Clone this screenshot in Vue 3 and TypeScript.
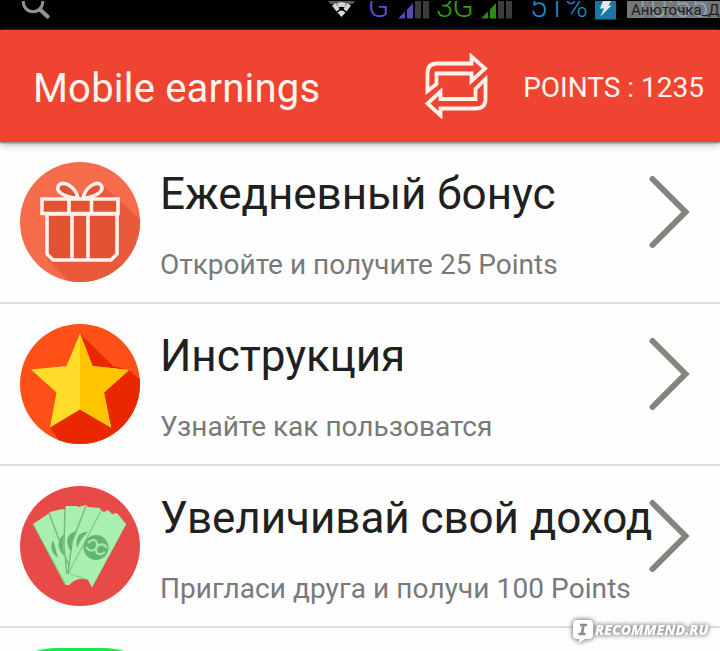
<script setup lang="ts">
interface OfferRow {
  id: 'gift' | 'star' | 'money'
  title: string
  subtitle: string
}

const rows: OfferRow[] = [
  { id: 'gift', title: 'Ежедневный бонус', subtitle: 'Откройте и получите 25 Points' },
  { id: 'star', title: 'Инструкция', subtitle: 'Узнайте как пользоватся' },
  { id: 'money', title: 'Увеличивай свой доход', subtitle: 'Пригласи друга и получи 100 Points' },
]
const points = 1235
</script>

<template>
  <main class="screen">
    <div class="status">
      <svg class="search" width="32" height="20" viewBox="0 0 32 20" fill="none" stroke="#929292">
        <circle cx="14" cy="2" r="9.7" stroke-width="3" />
        <path d="M21 9.5 L28.5 16.5" stroke-width="4.2" stroke-linecap="round" />
      </svg>
      <svg class="wifi" width="28" height="18" viewBox="0 0 28 18">
        <path d="M0 1 H27 L25 4 H2Z" fill="#555" />
        <path d="M9 3.500 Q13.500 1 18 3.500 L16.500 7.500 Q13.500 6 10.500 7.500Z" fill="#d8d8d8" />
        <path d="M4 5.500 L8 3 L11.500 9 L8.500 11.500Z M23 5.500 L19 3 L15.500 9 L18.500 11.500Z M9.500 12.500 Q13.500 8.500 17.500 12.500 L13.500 17Z" fill="#d8d8d8" />
      </svg>
      <span class="net g">G</span>
      <svg class="bars" width="32" height="19" viewBox="0 0 32 19">
        <path d="M0 18.500 L7 11.500 V18.500Z M9 9.500 L15 3 V18.500 H9Z" fill="#5a48b8" />
        <path d="M17 1h6v17.500h-6z M25 1h6v17.500h-6z" fill="#3c3c3c" />
      </svg>
      <span class="net three">3G</span>
      <svg class="bars" width="32" height="19" viewBox="0 0 32 19">
        <path d="M0 18.500 L7 11.500 V18.500Z M9 9.500 L15 3 V18.500 H9Z" fill="#2c8f0c" />
        <path d="M17 1h6v17.500h-6z M25 1h6v17.500h-6z" fill="#3c3c3c" />
      </svg>
      <span class="net percent">51%</span>
      <svg class="charge" width="21" height="20" viewBox="0 0 21 20">
        <rect y="1" width="21" height="18.500" fill="#1678a6" />
        <path d="M8 1 H16 L13.500 5.500 H16.500 L5.500 16.500 L9 8.500 H5Z" fill="#e8e8e8" />
      </svg>
      <div class="clock">
        <span class="time">10:55</span>
        <span class="author">Анюточка_Д</span>
      </div>
    </div>

    <header class="appbar">
      <h1>Mobile earnings</h1>
      <svg class="repeat" width="64" height="66" viewBox="0 0 64 66" fill="none" stroke="#fff0ea" stroke-width="3.8">
        <path d="M2.500 38 V20 Q2.500 10.500 12 10.500 H46.500 V3.500 L60 15.500 L46.500 28 V20.500 H11.500 V31 Z" />
        <path d="M60.500 26 V46 Q60.500 55.500 51 55.500 H15.500 V62.500 L2.500 50.500 L15.500 38.500 V46 H50.500 V36 Z" />
      </svg>
      <span class="points">POINTS : {{ points }}</span>
    </header>

    <section class="list">
      <article v-for="row in rows" :key="row.id" class="row">
        <svg v-if="row.id === 'gift'" class="badge" viewBox="0 0 120 120">
          <clipPath id="gift-circle"><circle cx="60" cy="60" r="60" /></clipPath>
          <g clip-path="url(#gift-circle)">
            <path d="M0 0H120V120H0Z" fill="#f66b49" />
            <path d="M82 23 L130 66 V130 H60 L27 97 V52 L21 48 V37 H47Z" fill="#e85a3b" />
          </g>
          <g fill="#e25336" stroke="#fff0ec" stroke-width="3.600" stroke-linejoin="round">
            <path d="M27 52 H97 V92 L91 98 H33 L27 92Z" />
            <path d="M52 52V98 M68 52V98" />
            <path d="M22 37 H98 V51.500 H22Z M49 37V51.500 M71.500 37V51.500" stroke-linejoin="miter" />
            <path d="M58 36 C56 26 45 18 39 23 C34 29 44 35 56 36 M63 36 C65 26 76 18 81 23 C85 29 76 35 64 36" />
          </g>
        </svg>

        <svg v-else-if="row.id === 'star'" class="badge" viewBox="0 0 120 120">
          <clipPath id="star-circle"><circle cx="60" cy="60" r="60" /></clipPath>
          <g clip-path="url(#star-circle)">
            <path d="M0 0H120V120H0Z" fill="#ff5018" />
            <path d="M60 9.500 L93 42 L109 46 L130 64 V130 H48 L30 103.500 L60 60Z" fill="#ea2800" />
          </g>
          <path d="M60 9.500 L72.500 42 L109 46 L84 68.500 L91 103.500 L60 85.500 L30 103.500 L36.500 68.500 L11 45.500 L46.500 42Z" fill="#ffdc27" />
          <path d="M60 9.500 L72.500 42 L109 46 L84 68.500 L91 103.500 L60 85.500Z" fill="#ffc400" />
        </svg>

        <svg v-else class="badge" viewBox="0 0 120 120">
          <circle cx="60" cy="60" r="60" fill="#e84a47" />
          <path d="M13 38 L28 28 L30 26 L42 23 L45 24 L46 20 L57 20 L58 21 L66 19 L68 21 L80 22 L81 26 L106 38 L72 101 L68 94 Q58 90 49 99 L45 99Z" fill="#a9efb2" />
          <path d="M29 27 L49 80 M45 23 L44 60 L47 88 M66 20 L52 56 L48 88" stroke="#75bd7e" stroke-width="1.500" fill="none" />
          <path d="M13 38 L46 99 M106 38 L72 101" stroke="#7fc586" stroke-width="1" fill="none" />
          <g fill="#65b572">
            <path d="M33 54 Q28 64 38 72 Q36 64 33 54Z" />
            <path d="M44 48 Q33 58 44 70 Q42 60 44 48Z" />
            <path d="M57 45 Q43 48 49 63 L52 64 Q51 54 57 45Z" />
            <path d="M68 46 Q54 46 57 62 Q61 52 68 46Z" />
          </g>
          <path d="M49 86 L81 24 L84 26 L88 24 L92 28 L97 27 L106 38 L72 101 L68 94 L51 87Z" fill="#a9efb2" />
          <path d="M48 88 L81 25 M50 88 L69 94" stroke="#83c98c" stroke-width="1.300" fill="none" />
          <circle cx="76" cy="61.500" r="12.500" fill="#65b572" />
          <path d="M68 57 Q72 52 76 55 Q79 61 74 64 Q69 66 66 61 M85 66 Q80 70 77 67 Q74 62 79 59 Q84 57 87 62" fill="none" stroke="#a3e8ab" stroke-width="2.200" />
        </svg>

        <div class="copy">
          <h2>{{ row.title }}</h2>
          <p :class="row.id">{{ row.subtitle }}</p>
        </div>
        <svg class="chevron" width="44" height="76" viewBox="0 0 44 76">
          <path d="M4.500 5 L37.500 38 L4.500 71" fill="none" stroke="#85857d" stroke-width="6" stroke-linecap="round" />
        </svg>
      </article>
      <div class="next"><div class="next-badge"></div></div>
    </section>

    <div class="watermark">
      <svg width="24" height="26" viewBox="0 0 24 26">
        <path d="M5 1H17Q21 1 21 5V16Q21 20 17 20H13L7 24V20H5Q1 20 1 16V5Q1 1 5 1Z" fill="#fff" />
        <path d="M8 6H15M6.500 15H13.500M11.500 6L10 15" stroke="#8c8c8c" stroke-width="2.600" />
      </svg>
      <span>RECOMMEND.RU</span>
    </div>
  </main>
</template>

<style>
body { margin: 0; overflow: hidden; }
</style>

<style scoped>
.screen { position: relative; width: 720px; height: 651px; overflow: hidden; display: flex; flex-direction: column; background: #fefefe; font-family: Roboto, "Liberation Sans", sans-serif; }
.status { height: 29px; border-top: 1px solid #000; flex: none; display: flex; align-items: flex-start; background: #000; overflow: hidden; }
.status svg { display: block; flex: none; margin-top: -1px; }
.search { margin-left: 19px; }
.wifi { margin-left: 277px; }
.net { flex: none; height: 30px; line-height: 34px; margin-top: -11px; font-size: 31px; font-weight: 300; white-space: nowrap; }
.g { width: 30px; margin-left: 12px; color: #6652d0; }
.three { width: 45px; margin-left: 6px; color: #2fa00a; letter-spacing: -.7px; }
.percent { width: 66px; margin-left: 17px; color: #1b8cc5; letter-spacing: .3px; }
.charge { margin-left: -1px; }
.clock { position: relative; margin-top: -1px; margin-left: auto; width: 93px; height: 18px; background: #777; overflow: hidden; }
.time { position: absolute; left: 6px; top: -10px; color: #7ca8bd; font-size: 31px; font-weight: 300; line-height: 34px; }
.author { position: absolute; left: 4px; top: 0; color: #202020; font-size: 15px; line-height: 20px; white-space: nowrap; }
.appbar { position: relative; z-index: 1; height: 112px; flex: none; display: flex; align-items: center; box-sizing: border-box; padding: 0 16px 0 33px; background: #f04432; color: #fff5ee; box-shadow: 0 1px 2px #777, 0 3px 7px #bbb; }
h1, h2, p { margin: 0; font-weight: 400; white-space: nowrap; }
h1 { width: 391px; font-size: 40px; line-height: 48px; padding-top: 6px; letter-spacing: .2px; }
.repeat { display: block; flex: none; margin-left: 1px; }
.points { margin-left: auto; font-size: 28px; line-height: 32px; padding-top: 3px; white-space: nowrap; }
.row { height: 162px; box-sizing: border-box; display: flex; align-items: flex-start; padding: 20px 28px 0 20px; border-bottom: 2px solid #dedede; }
.badge { width: 120px; height: 120px; display: block; flex: none; }
.copy { width: 486px; margin-left: 20px; flex: none; color: #202020; }
h2 { font-size: 44px; line-height: 52px; margin-top: 6px; letter-spacing: -.05px; }
p { font-size: 28px; line-height: 32px; margin-top: 29px; color: #797979; }
p.money { letter-spacing: .08px; }
.chevron { display: block; flex: none; margin: 12px 0 0 2px; }
.next { padding: 20px 20px 0; }
.next-badge { width: 120px; height: 120px; border-radius: 38px / 16px; background: #19e84d; }
.watermark { position: absolute; left: 572px; top: 619px; display: flex; align-items: flex-start; filter: drop-shadow(0 0 2px #888) drop-shadow(0 0 2px #aaa); }
.watermark span { color: #fff; font: italic 800 14px/22px "Open Sans", sans-serif; margin-left: -1px; }
</style>
